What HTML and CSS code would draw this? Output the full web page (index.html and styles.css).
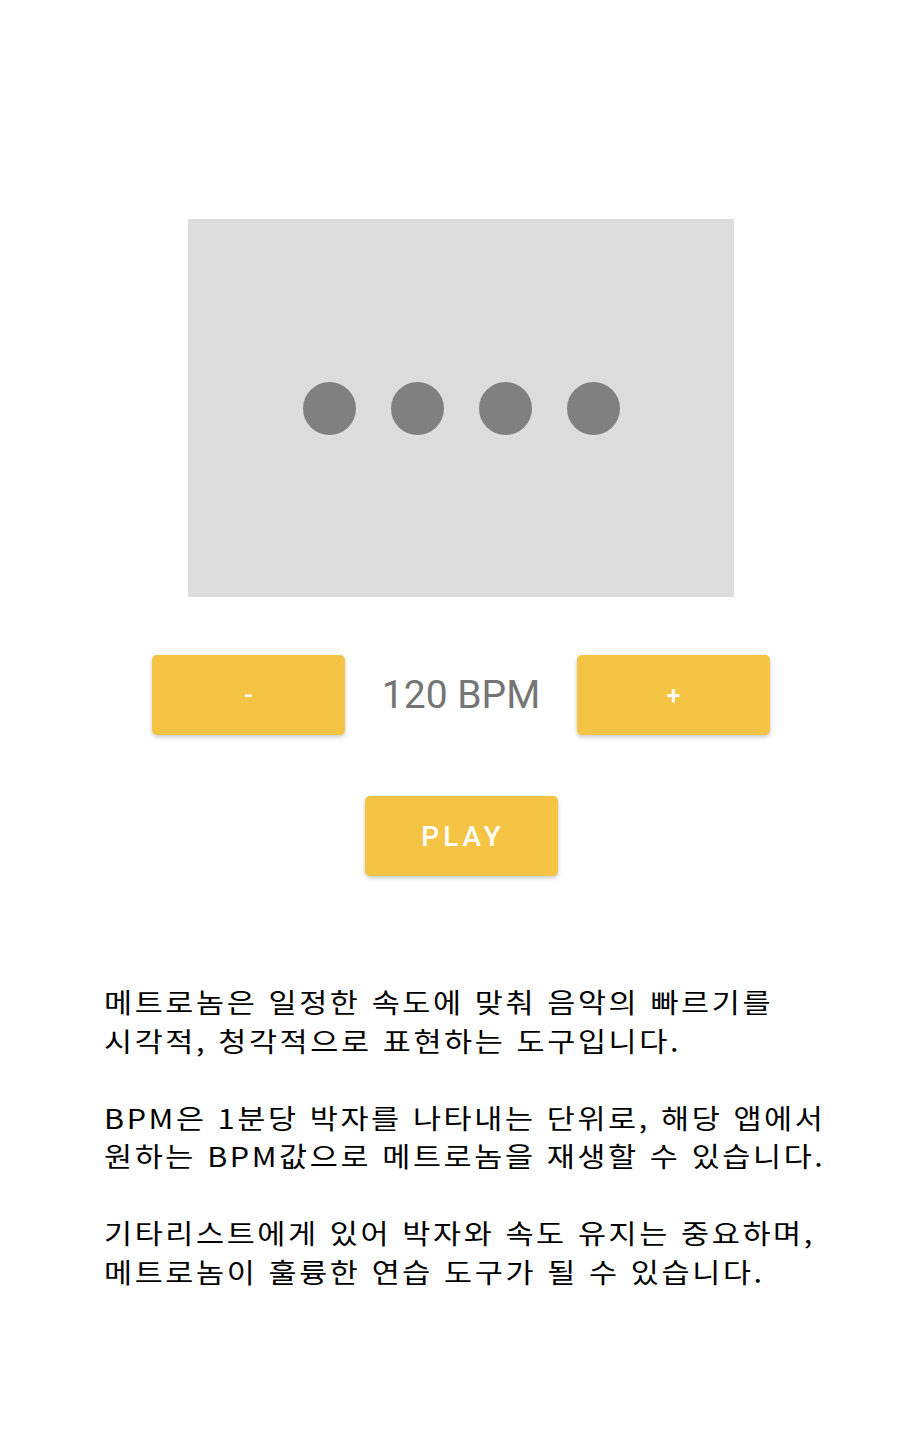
FILE: index.html
```html
<!DOCTYPE html>
<html lang="ko">
<head>
<meta charset="utf-8">
<link rel="stylesheet" href="styles.css">
</head>
<body>
<main class="page">
  <div class="display">
    <span class="dot"></span>
    <span class="dot"></span>
    <span class="dot"></span>
    <span class="dot"></span>
  </div>
  <div class="controls">
    <button class="btn btn-small">-</button>
    <span class="bpm">120 BPM</span>
    <button class="btn btn-small">+</button>
  </div>
  <button class="btn btn-play">PLAY</button>
  <section class="desc">
    <p><span class="line">메트로놈은 일정한 속도에 맞춰 음악의 빠르기를</span><span class="line">시각적, 청각적으로 표현하는 도구입니다.</span></p>
    <p><span class="line">BPM은 1분당 박자를 나타내는 단위로, 해당 앱에서</span><span class="line">원하는 BPM값으로 메트로놈을 재생할 수 있습니다.</span></p>
    <p><span class="line">기타리스트에게 있어 박자와 속도 유지는 중요하며,</span><span class="line">메트로놈이 훌륭한 연습 도구가 될 수 있습니다.</span></p>
  </section>
</main>
</body>
</html>
```

FILE: styles.css
```css
html, body {
  margin: 0;
  padding: 0;
  background: #ffffff;
}
.page {
  display: flex;
  flex-direction: column;
  align-items: center;
  padding-top: 219px;
  padding-left: 11px;
  font-family: Roboto, "Noto Sans", sans-serif;
}
.display {
  width: 546px;
  height: 378px;
  background: #dddddd;
  display: flex;
  align-items: center;
  justify-content: center;
  gap: 35px;
}
.dot {
  width: 53px;
  height: 53px;
  border-radius: 50%;
  background: #808080;
}
.controls {
  margin-top: 58px;
  display: flex;
  align-items: center;
}
.bpm {
  width: 232px;
  text-align: center;
  font-size: 39px;
  color: #757575;
}
.btn {
  border: none;
  border-radius: 5px;
  background: #f5c444;
  color: #ffffff;
  font-family: Roboto, sans-serif;
  font-weight: 500;
  box-shadow: 0 2px 4px rgba(0, 0, 0, 0.22);
  width: 193px;
  height: 80px;
  padding: 0;
}
.btn-small {
  font-size: 25px;
}
.btn-play {
  margin-top: 61px;
  font-size: 28px;
  letter-spacing: 4px;
  text-indent: 4px;
}
.desc {
  align-self: stretch;
  margin-top: 107px;
  padding-left: 93px;
  font-family: "Noto Sans CJK KR", "Noto Sans", sans-serif;
  font-size: 27px;
  font-weight: 400;
  line-height: 38.5px;
  letter-spacing: 2.3px;
  color: #000000;
}
.desc p {
  margin: 0 0 38.5px 0;
}
.line {
  display: block;
  width: max-content;
  height: 38.5px;
  white-space: nowrap;
  transform: scaleX(1.13);
  transform-origin: left center;
}
```
